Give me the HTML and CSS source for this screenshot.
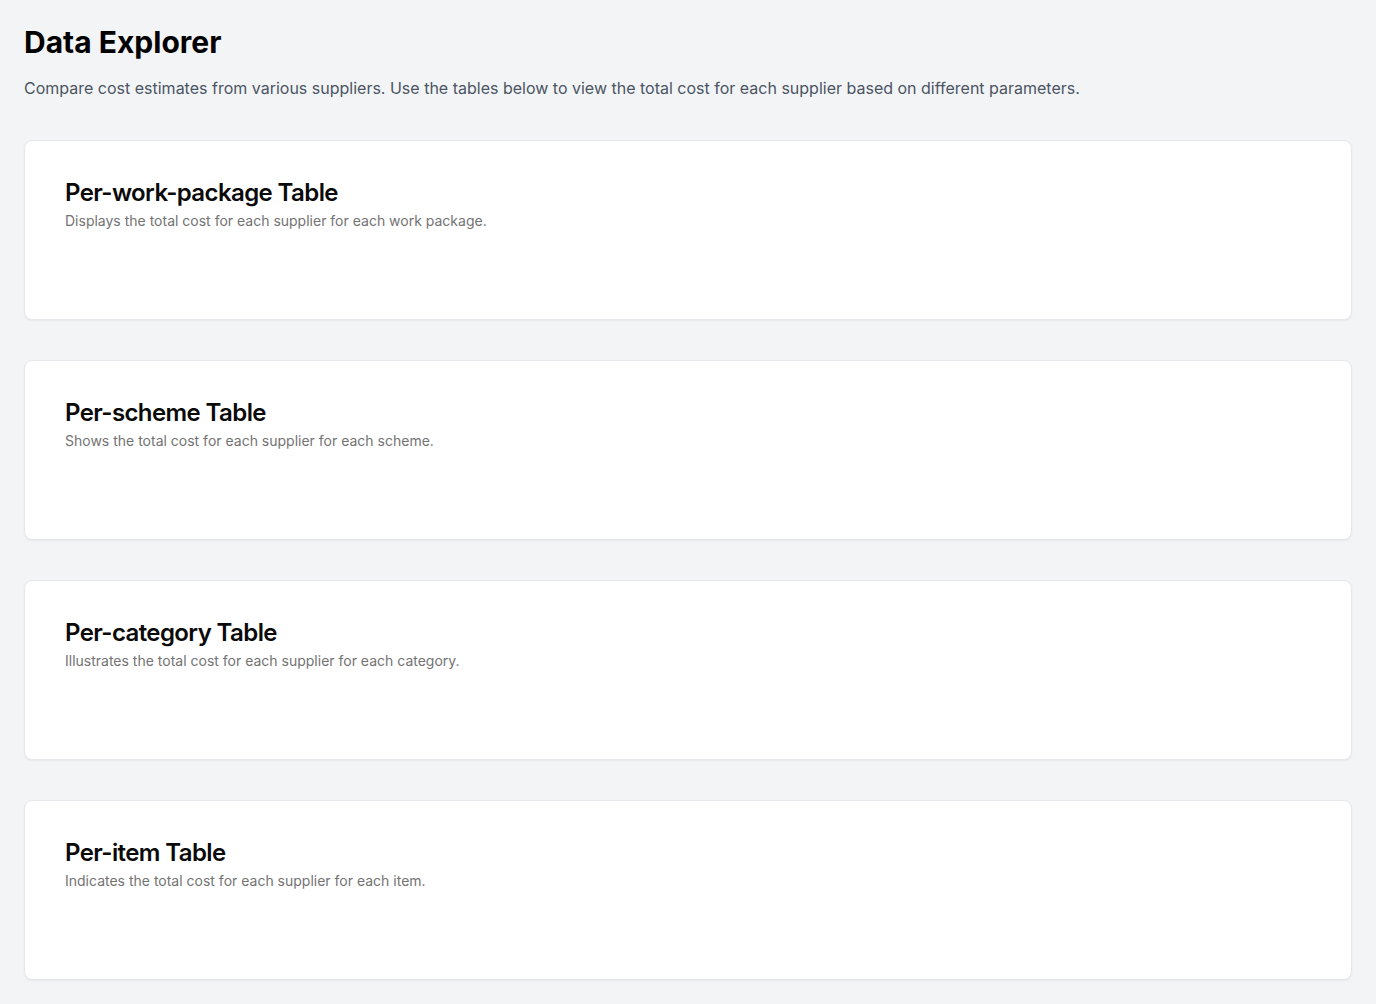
FILE: index.html
```html
<!DOCTYPE html>
<html lang="en">
<head>
<meta charset="utf-8">
<title>Data Explorer</title>
<link rel="stylesheet" href="styles.css">
</head>
<body>
<main class="page">
  <h1 class="page-title">Data Explorer</h1>
  <p class="page-desc">Compare cost estimates from various suppliers. Use the tables below to view the total cost for each supplier based on different parameters.</p>
  <section class="cards">
    <div class="card">
      <h2 class="card-title">Per-work-package Table</h2>
      <p class="card-desc">Displays the total cost for each supplier for each work package.</p>
    </div>
    <div class="card">
      <h2 class="card-title">Per-scheme Table</h2>
      <p class="card-desc">Shows the total cost for each supplier for each scheme.</p>
    </div>
    <div class="card">
      <h2 class="card-title">Per-category Table</h2>
      <p class="card-desc">Illustrates the total cost for each supplier for each category.</p>
    </div>
    <div class="card">
      <h2 class="card-title">Per-item Table</h2>
      <p class="card-desc">Indicates the total cost for each supplier for each item.</p>
    </div>
  </section>
</main>
</body>
</html>
```
FILE: styles.css
```css
* { box-sizing: border-box; }
html, body {
  margin: 0;
  padding: 0;
  background: #f3f4f6;
  font-family: Inter, "Noto Sans", sans-serif;
  color: #0a0a0a;
}
.page {
  padding: 24px;
  display: flex;
  flex-direction: column;
}
.page-title {
  margin: 0;
  font-size: 30px;
  line-height: 36px;
  font-weight: 700;
  color: #000;
}
.page-desc {
  margin: 16px 0 0;
  font-size: 16px;
  line-height: 24px;
  color: #4b5563;
}
.cards {
  margin-top: 40px;
  display: flex;
  flex-direction: column;
  gap: 40px;
}
.card {
  background: #fff;
  border: 1px solid #e5e7eb;
  border-radius: 8px;
  box-shadow: 0 1px 2px rgba(0,0,0,0.05);
  height: 180px;
  padding: 40px 40px;
  display: flex;
  flex-direction: column;
  gap: 6px;
}
.card-title {
  margin: 0;
  font-size: 24px;
  line-height: 24px;
  font-weight: 600;
  letter-spacing: -0.025em;
  color: #0a0a0a;
}
.card-desc {
  margin: 0;
  font-size: 14px;
  line-height: 20px;
  color: #737373;
}
```
